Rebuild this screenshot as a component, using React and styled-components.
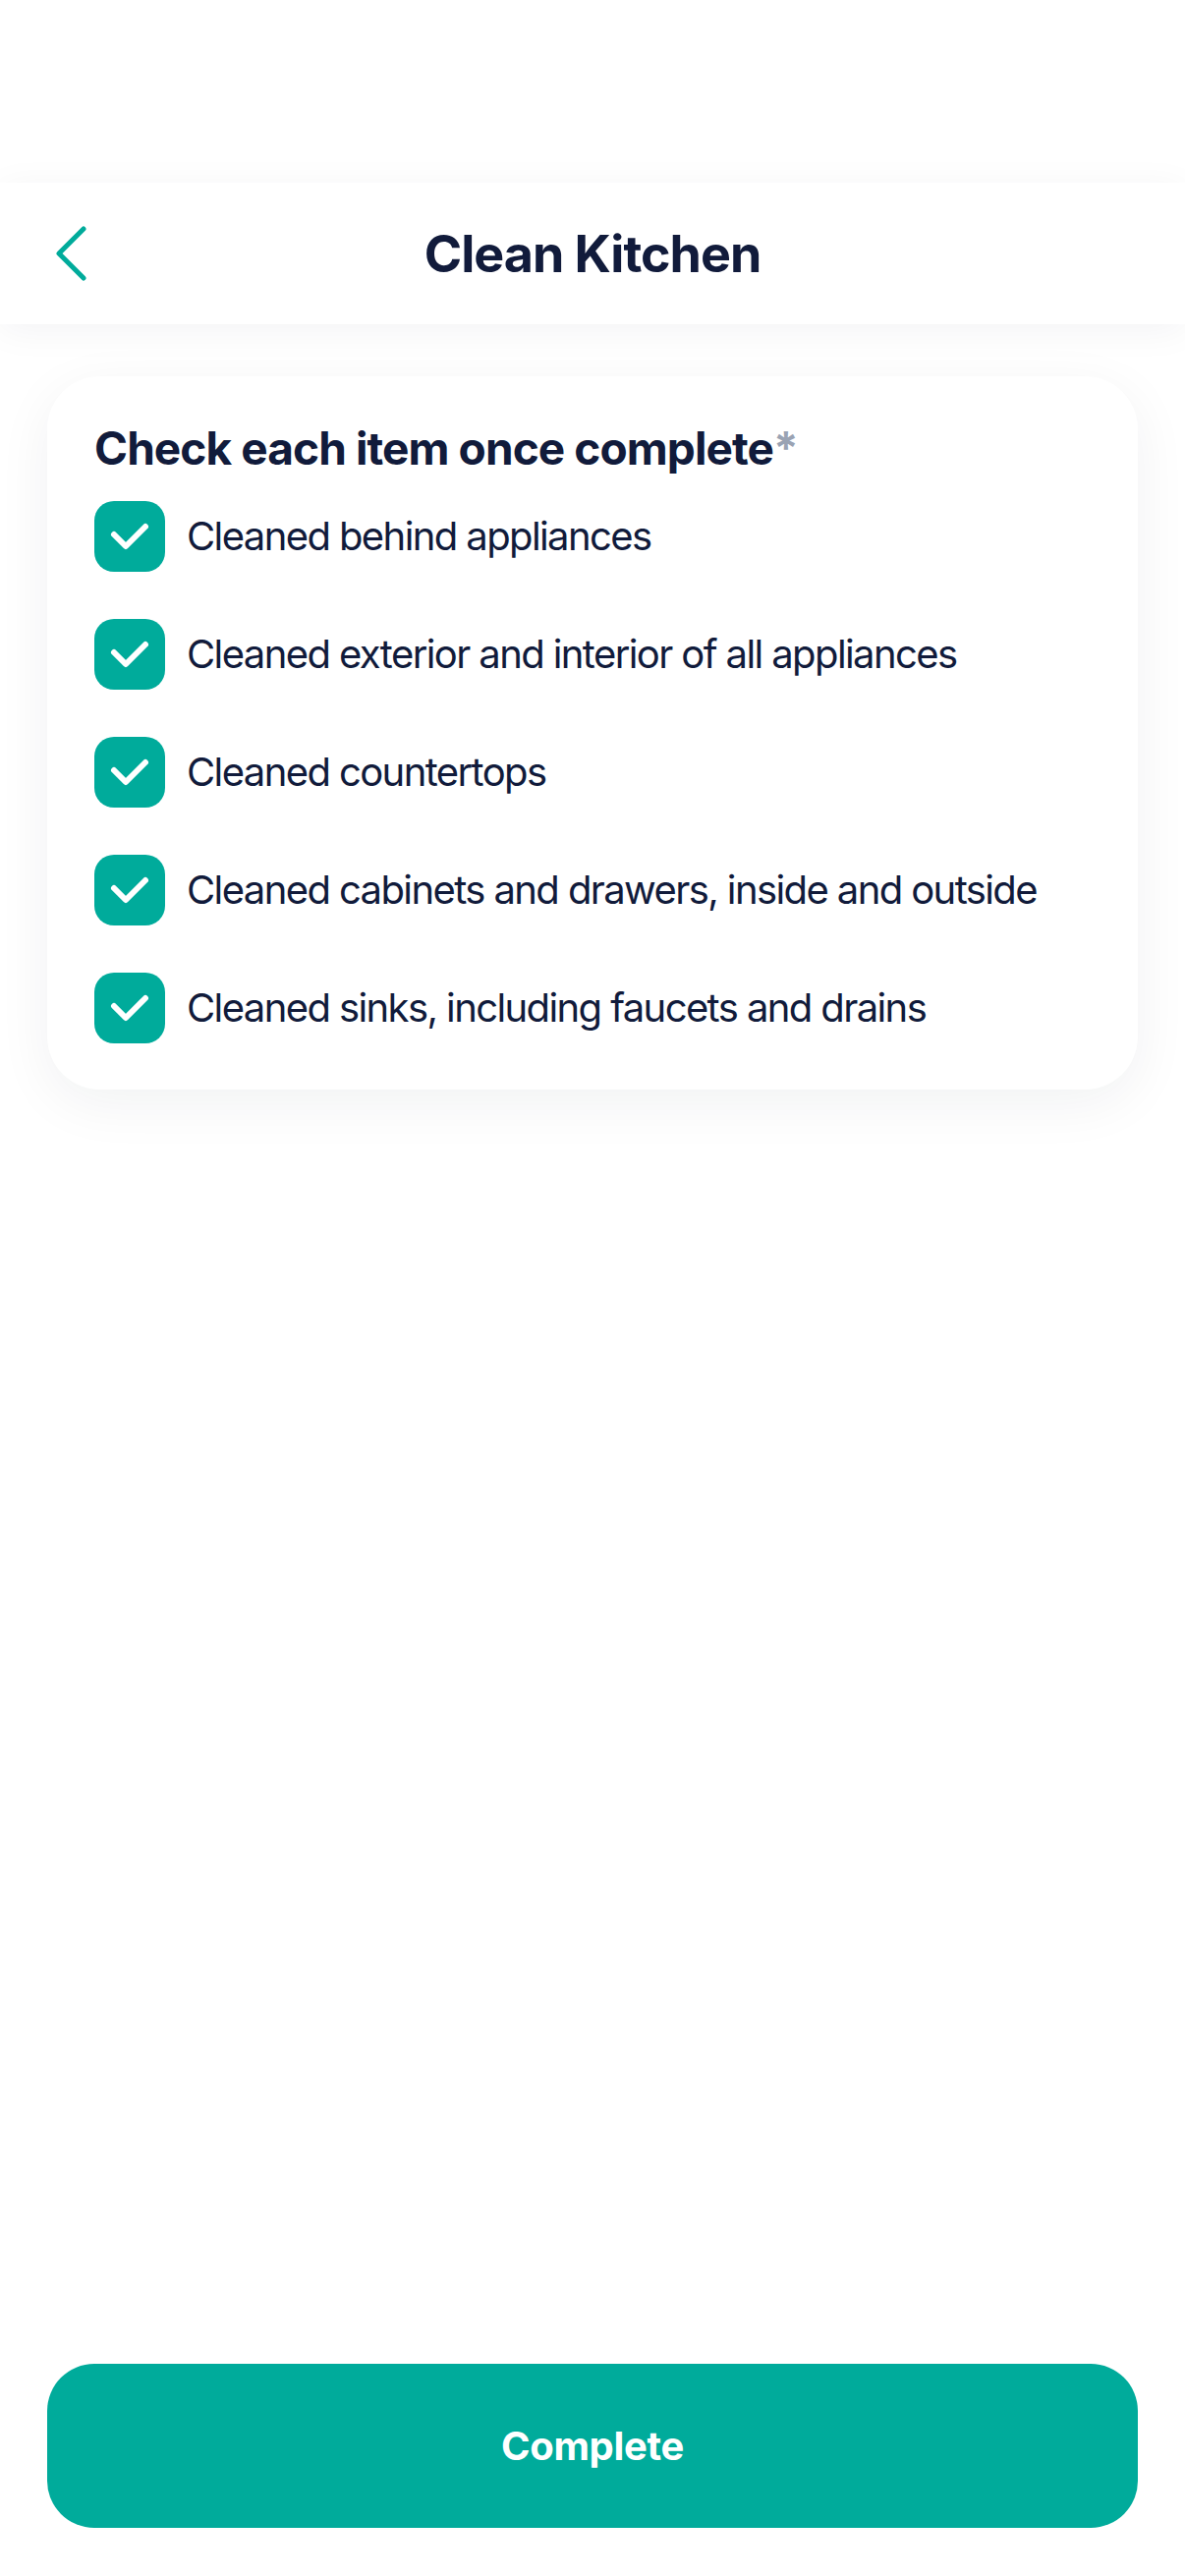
import React from "react";
import styled, { createGlobalStyle } from "styled-components";

const Global = createGlobalStyle`
  html, body { margin: 0; padding: 0; background: #ffffff; }
  body { font-family: Inter, "Noto Sans", sans-serif; -webkit-font-smoothing: antialiased; }
  * { box-sizing: border-box; }
`;

const Screen = styled.div`
  min-height: 100vh;
  display: flex;
  flex-direction: column;
  background: #ffffff;
`;

const StatusBar = styled.div`
  height: 186px;
  flex-shrink: 0;
`;

const Header = styled.header`
  position: relative;
  height: 144px;
  flex-shrink: 0;
  display: flex;
  align-items: center;
  justify-content: center;
  background: #ffffff;
  box-shadow: 0 6px 36px rgba(17, 27, 59, 0.05);
  z-index: 1;
`;

const BackButton = styled.button`
  position: absolute;
  left: 50px;
  top: 50%;
  transform: translateY(-50%);
  width: 44px;
  height: 64px;
  padding: 0;
  border: 0;
  background: transparent;
  display: flex;
  align-items: center;
  justify-content: center;
`;

const Title = styled.h1`
  margin: 0;
  font-size: 52px;
  font-weight: 700;
  color: #111b3b;
  letter-spacing: -1px;
`;

const Content = styled.main`
  padding: 53px 48px 0;
`;

const Card = styled.section`
  background: #ffffff;
  border-radius: 54px;
  padding: 44px 48px 47px 48px;
  box-shadow: 0 14px 56px rgba(17, 27, 59, 0.06);
`;

const Heading = styled.h2`
  margin: 0 0 25px;
  font-size: 46px;
  line-height: 58px;
  font-weight: 700;
  color: #111b3b;
  letter-spacing: -0.9px;
`;

const Required = styled.span`
  color: #9aa3b3;
  font-weight: 700;
`;

const List = styled.ul`
  list-style: none;
  margin: 0;
  padding: 0;
  display: flex;
  flex-direction: column;
  gap: 48px;
`;

const Item = styled.li`
  display: flex;
  align-items: center;
  gap: 22px;
`;

const Box = styled.span`
  width: 72px;
  height: 72px;
  flex-shrink: 0;
  border-radius: 20px;
  background: ${(p) => (p.checked ? "#00ab9b" : "#ffffff")};
  display: flex;
  align-items: center;
  justify-content: center;
`;

const Label = styled.span`
  font-size: 40px;
  line-height: 56px;
  font-weight: 400;
  color: #111b3b;
  letter-spacing: -1.6px;
  white-space: nowrap;
`;

const Footer = styled.footer`
  margin-top: auto;
  padding: 0 48px 49px;
`;

const PrimaryButton = styled.button`
  width: 100%;
  height: 167px;
  border: 0;
  border-radius: 48px;
  background: #00ab9b;
  color: #ffffff;
  font-family: Inter, "Noto Sans", sans-serif;
  font-size: 40px;
  font-weight: 700;
  letter-spacing: -0.3px;
`;

const items = [
  "Cleaned behind appliances",
  "Cleaned exterior and interior of all appliances",
  "Cleaned countertops",
  "Cleaned cabinets and drawers, inside and outside",
  "Cleaned sinks, including faucets and drains",
];

const Chevron = () => (
  <svg width="34" height="60" viewBox="0 0 34 60" fill="none">
    <path
      d="M30 5 L5 30 L30 55"
      stroke="#00ab9b"
      strokeWidth="5"
      strokeLinecap="round"
      strokeLinejoin="round"
    />
  </svg>
);

const Check = () => (
  <svg width="72" height="72" viewBox="0 0 72 72" fill="none">
    <path
      d="M20 34 L32 46 L52 26"
      stroke="#ffffff"
      strokeWidth="6"
      strokeLinecap="round"
      strokeLinejoin="round"
    />
  </svg>
);

export default function App() {
  return (
    <>
      <Global />
      <Screen>
        <StatusBar />
        <Header>
          <BackButton aria-label="Back">
            <Chevron />
          </BackButton>
          <Title>Clean Kitchen</Title>
        </Header>
        <Content>
          <Card>
            <Heading>
              Check each item once complete<Required>*</Required>
            </Heading>
            <List>
              {items.map((t) => (
                <Item key={t}>
                  <Box checked>
                    <Check />
                  </Box>
                  <Label>{t}</Label>
                </Item>
              ))}
            </List>
          </Card>
        </Content>
        <Footer>
          <PrimaryButton>Complete</PrimaryButton>
        </Footer>
      </Screen>
    </>
  );
}
